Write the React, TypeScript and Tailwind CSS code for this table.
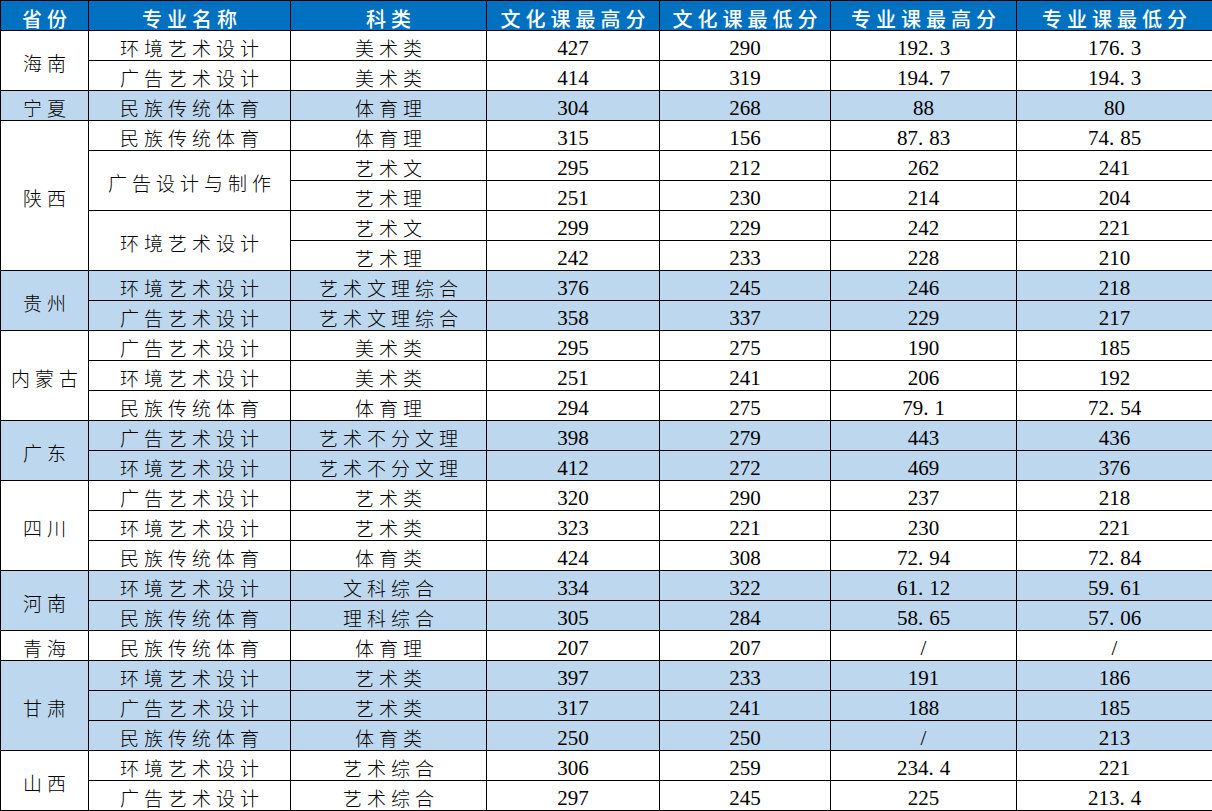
import React from "react";

type Row = {
	prov?: [string, number];
	major?: [string, number];
	kind: string;
	v: string[];
	blue?: boolean;
};

const rows: Row[] = [
	{ prov: ["海南", 2], major: ["环境艺术设计", 1], kind: "美术类", v: ["427", "290", "192.3", "176.3"] },
	{ major: ["广告艺术设计", 1], kind: "美术类", v: ["414", "319", "194.7", "194.3"] },
	{ prov: ["宁夏", 1], major: ["民族传统体育", 1], kind: "体育理", v: ["304", "268", "88", "80"], blue: true },
	{ prov: ["陕西", 5], major: ["民族传统体育", 1], kind: "体育理", v: ["315", "156", "87.83", "74.85"] },
	{ major: ["广告设计与制作", 2], kind: "艺术文", v: ["295", "212", "262", "241"] },
	{ kind: "艺术理", v: ["251", "230", "214", "204"] },
	{ major: ["环境艺术设计", 2], kind: "艺术文", v: ["299", "229", "242", "221"] },
	{ kind: "艺术理", v: ["242", "233", "228", "210"] },
	{ prov: ["贵州", 2], major: ["环境艺术设计", 1], kind: "艺术文理综合", v: ["376", "245", "246", "218"], blue: true },
	{ major: ["广告艺术设计", 1], kind: "艺术文理综合", v: ["358", "337", "229", "217"], blue: true },
	{ prov: ["内蒙古", 3], major: ["广告艺术设计", 1], kind: "美术类", v: ["295", "275", "190", "185"] },
	{ major: ["环境艺术设计", 1], kind: "美术类", v: ["251", "241", "206", "192"] },
	{ major: ["民族传统体育", 1], kind: "体育理", v: ["294", "275", "79.1", "72.54"] },
	{ prov: ["广东", 2], major: ["广告艺术设计", 1], kind: "艺术不分文理", v: ["398", "279", "443", "436"], blue: true },
	{ major: ["环境艺术设计", 1], kind: "艺术不分文理", v: ["412", "272", "469", "376"], blue: true },
	{ prov: ["四川", 3], major: ["广告艺术设计", 1], kind: "艺术类", v: ["320", "290", "237", "218"] },
	{ major: ["环境艺术设计", 1], kind: "艺术类", v: ["323", "221", "230", "221"] },
	{ major: ["民族传统体育", 1], kind: "体育类", v: ["424", "308", "72.94", "72.84"] },
	{ prov: ["河南", 2], major: ["环境艺术设计", 1], kind: "文科综合", v: ["334", "322", "61.12", "59.61"], blue: true },
	{ major: ["民族传统体育", 1], kind: "理科综合", v: ["305", "284", "58.65", "57.06"], blue: true },
	{ prov: ["青海", 1], major: ["民族传统体育", 1], kind: "体育理", v: ["207", "207", "/", "/"] },
	{ prov: ["甘肃", 3], major: ["环境艺术设计", 1], kind: "艺术类", v: ["397", "233", "191", "186"], blue: true },
	{ major: ["广告艺术设计", 1], kind: "艺术类", v: ["317", "241", "188", "185"], blue: true },
	{ major: ["民族传统体育", 1], kind: "体育类", v: ["250", "250", "/", "213"], blue: true },
	{ prov: ["山西", 2], major: ["环境艺术设计", 1], kind: "艺术综合", v: ["306", "259", "234.4", "221"] },
	{ major: ["广告艺术设计", 1], kind: "艺术综合", v: ["297", "245", "225", "213.4"] },
];

const headers = ["省份", "专业名称", "科类", "文化课最高分", "文化课最低分", "专业课最高分", "专业课最低分"];
const widths = [88, 202, 196, 173, 171, 186, 196];

const cjk = "font-['Noto_Sans_CJK_SC',sans-serif]";
const cell = "border border-black p-0 text-center align-middle";
const textCell = `${cell} ${cjk} pt-[5px] pl-[5px] text-[19px] leading-[22px] font-light tracking-[5px]`;

const Num = ({ value }: { value: string }) => {
	const parts = value.split(".");
	if (parts.length === 1) return <>{value}</>;
	return (
		<>
			{parts[0]}
			<span className="pr-[6px]">.</span>
			{parts[1]}
		</>
	);
};

export default function App() {
	return (
		<div className="h-[811px] w-[1212px] overflow-hidden bg-white">
			<table className="w-[1212px] table-fixed border-collapse text-black">
				<colgroup>
					{widths.map((w, i) => (
						<col key={i} style={{ width: w }} />
					))}
				</colgroup>
				<thead>
					<tr className="h-[30px] bg-[#0070c0]">
						{headers.map((h) => (
							<th
								key={h}
								className={`${cell} ${cjk} pt-[6px] pl-[5px] text-[20px] leading-[22px] font-medium tracking-[5px] text-white`}
							>
								{h}
							</th>
						))}
					</tr>
				</thead>
				<tbody>
					{rows.map((r, i) => (
						<tr key={i} className={`h-[30px] ${r.blue ? "bg-[#bdd7ee]" : "bg-white"}`}>
							{r.prov && (
								<td rowSpan={r.prov[1]} className={textCell}>
									{r.prov[0]}
								</td>
							)}
							{r.major && (
								<td rowSpan={r.major[1]} className={textCell}>
									{r.major[0]}
								</td>
							)}
							<td className={textCell}>{r.kind}</td>
							{r.v.map((n, j) => (
								<td
									key={j}
									className={`${cell} pt-[5px] font-['Liberation_Serif',serif] text-[21px] leading-[22px]`}
								>
									<Num value={n} />
								</td>
							))}
						</tr>
					))}
				</tbody>
			</table>
		</div>
	);
}
